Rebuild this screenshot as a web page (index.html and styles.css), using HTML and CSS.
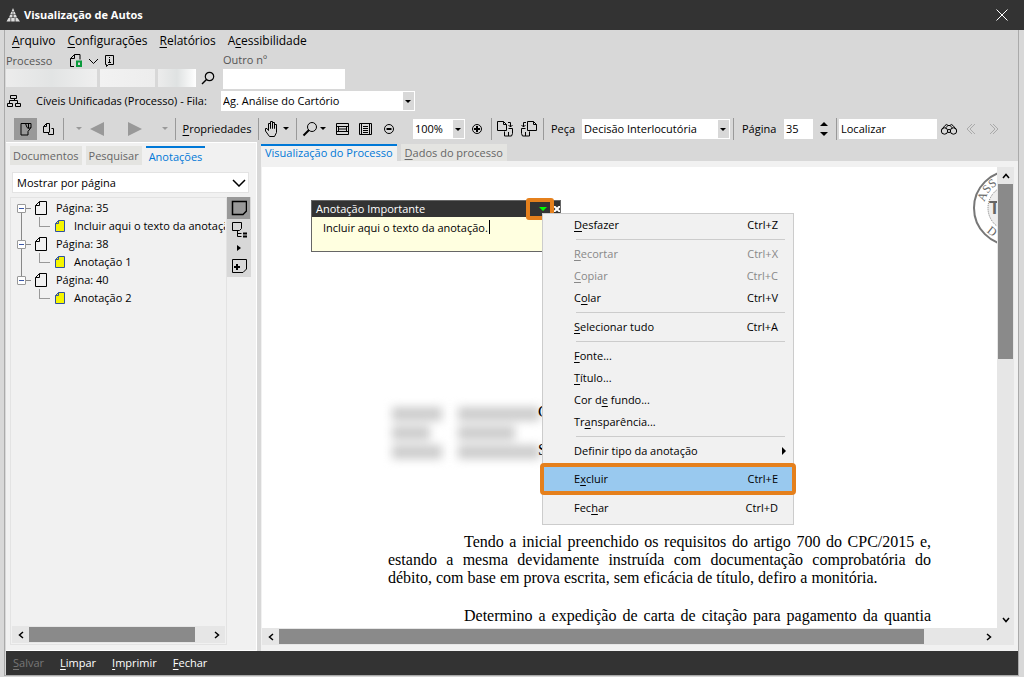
FILE: index.html
```html
<!DOCTYPE html>
<html lang="pt-BR">
<head>
    <meta charset="UTF-8">
    <meta name="viewport" content="width=device-width, initial-scale=1.0">
    <title>Visualização de Autos</title>
    <link rel="stylesheet" href="styles.css">
</head>
<body>
    <header class="titlebar">
        <svg class="logo" width="14" height="14" viewBox="0 0 14 14"><path d="M7 0L8.500 3.500h-3zM5.200 4h1.500v2.500H4.200zM7.300 4h1.500l1 2.500H7.300zM4 7h2.500v2.500H3zM7.500 7H10l1 2.500H7.500zM2.500 10H4.500v3.500H0.500zM5.200 10h3.500v3.500H5.200zM9.500 10h2l2.500 3.500H9.500z"/></svg>
        <h1>Visualização de Autos</h1>
        <button class="close" aria-label="Fechar janela"><svg width="12" height="12" viewBox="0 0 12 12"><path d="M0.500 0.500l11 11M11.500 0.500l-11 11"/></svg></button>
    </header>

    <main class="window">
        <nav class="menubar">
            <a href="#"><u>A</u>rquivo</a>
            <a href="#"><u>C</u>onfigurações</a>
            <a href="#"><u>R</u>elatórios</a>
            <a href="#">A<u>c</u>essibilidade</a>
        </nav>

        <div class="process">
            <div class="process-number">
                <div class="process-label">
                    <label for="numero">Processo</label>
                    <svg class="icon" width="46" height="14" viewBox="0 0 46 14">
                        <path d="M5 12.500H1.500v-8l4-4h5.500v5M1.500 4.500h4v-4M20 5l4.500 4.500L29 5M36.500 1.500h8v9h-5l-2 2v-2h-1zM40.500 5v4M39 8.500h3M40.500 3v1"/>
                        <path class="green" d="M8 7.500h4v4.500h-4z"/>
                    </svg>
                </div>
                <div class="number-fields">
                    <input class="number-main" id="numero" type="text">
                    <input class="number-year" type="text" aria-label="Ano">
                    <input class="number-court" type="text" aria-label="Foro">
                    <button aria-label="Pesquisar processo"><svg class="icon" width="14" height="14" viewBox="0 0 14 14"><circle cx="8.500" cy="5.500" r="4.200" stroke-width="1.200"/><path d="M5.500 8.500L1 13" stroke-width="1.500"/></svg></button>
                </div>
            </div>
            <div class="other-number">
                <label for="outro">Outro nº</label>
                <input id="outro" type="text">
            </div>
        </div>

        <div class="queue">
            <svg class="icon" width="16" height="14" viewBox="0 0 16 14"><path d="M4.500 1.500h6v3h-6zM8.500 4.500v2M3.500 9V6.500h8V9M1.500 9.500h5v3h-5zM9.500 9.500h5v3h-5z"/></svg>
            <label for="fila">Cíveis Unificadas (Processo) - Fila:</label>
            <span class="combo combo-queue"><select id="fila"><option>Ag. Análise do Cartório</option></select></span>
        </div>

        <div class="toolbar">
            <div class="group group-view">
                <button class="tool active" aria-label="Página"><svg class="icon" width="12" height="14" viewBox="0 0 12 14"><path d="M1 1.500h10v4l-3 4v3.500H1zM5.500 1.500l1.500 4 1.500 1 2.500-1M8.500 2v4"/></svg></button>
                <button class="tool" aria-label="Páginas"><svg class="icon" width="13" height="14" viewBox="0 0 13 14"><path d="M7 10.500H1.500v-6l3-3h3v9M4.500 1.500v3h-3M9.500 6.500h2v6h-5v-2"/></svg></button>
            </div>
            <div class="group group-nav">
                <button class="drop dim" aria-label="Opções anteriores"></button>
                <button class="nav" aria-label="Anterior"><svg width="14" height="14" viewBox="0 0 14 14"><path d="M14 0v14L0 7z"/></svg></button>
                <button class="nav spaced" aria-label="Próximo"><svg width="14" height="14" viewBox="0 0 14 14"><path d="M0 0v14l14-7z"/></svg></button>
                <button class="drop dim spaced" aria-label="Opções seguintes"></button>
            </div>
            <div class="group">
                <button class="properties"><u>P</u>ropriedades</button>
            </div>
            <div class="group group-hand">
                <button aria-label="Mover"><svg class="icon" width="18" height="18" viewBox="0 0 18 18"><path d="M6.500 16.500L2.500 11V8.500h1.500l1.500 2V3.500h2v5V1.500h2v7V2.500h2v6V4.500h2v8l-2 4z"/></svg></button>
                <button class="drop" aria-label="Opções de mover"></button>
            </div>
            <div class="group group-zoom">
                <button aria-label="Lupa"><svg class="icon" width="16" height="16" viewBox="0 0 16 16"><circle cx="10" cy="6" r="4.500"/><path d="M7 9l-5.500 5.500" stroke-width="2"/></svg></button>
                <button class="drop" aria-label="Opções da lupa"></button>
                <button class="fit" aria-label="Ajustar à largura"><svg class="icon" width="16" height="16" viewBox="0 0 16 16"><path d="M1.500 2.500h12v11h-12zM1.500 5.500h12v5h-12zM4 8h7M3.500 6v4M11.500 6v4"/></svg></button>
                <button class="fit" aria-label="Página inteira"><svg class="icon" width="16" height="16" viewBox="0 0 16 16"><path d="M1.500 2.500h12v11h-12zM3.500 2.500v11M11.500 2.500v11M5 5.500h5M5 7.500h5M5 9.500h5M5 11.500h5"/></svg></button>
                <button class="fit" aria-label="Diminuir"><svg class="icon" width="16" height="16" viewBox="0 0 16 16"><circle cx="8" cy="8" r="4.500"/><path d="M5.500 8h5" stroke-width="2"/></svg></button>
                <span class="combo combo-zoom"><select aria-label="Zoom"><option>100%</option></select></span>
                <button aria-label="Aumentar"><svg class="icon" width="16" height="16" viewBox="0 0 16 16"><circle cx="8" cy="8" r="4.500"/><path d="M5 8h6M8 5v6" stroke-width="2"/></svg></button>
            </div>
            <div class="group group-rotate">
                <button aria-label="Girar à direita"><svg class="icon" width="18" height="18" viewBox="0 0 18 18"><path d="M1.500 1.500h6l3 3v6h-9zM7.500 1.500v3h3M12 2.500h2.500V7M12.500 5l2 2 2-2M12.500 8.500h4v5l-1 2.500H8.500V11.500M12.500 12v4"/></svg></button>
                <button aria-label="Girar à esquerda"><svg class="icon" width="18" height="18" viewBox="0 0 18 18"><path d="M7.500 1.500h6l3 3v6h-9zM13.500 1.500v3h3M6 2.500H3.500V7M1.500 5l2 2 2-2M5.500 8.500h-4v5l1 2.500h7V11.500M5.500 12v4"/></svg></button>
            </div>
            <div class="group group-piece">
                <label for="peca">Peça</label>
                <span class="combo combo-piece"><select id="peca"><option>Decisão Interlocutória</option></select></span>
            </div>
            <div class="group group-page">
                <label for="pagina">Página</label>
                <input id="pagina" type="text" value="35">
                <span class="spinner">
                    <button aria-label="Próxima página"><svg width="8" height="4" viewBox="0 0 8 4"><path d="M0 4h8L4 0z"/></svg></button>
                    <button aria-label="Página anterior"><svg width="8" height="4" viewBox="0 0 8 4"><path d="M0 0h8L4 4z"/></svg></button>
                </span>
            </div>
            <div class="group group-find">
                <input type="text" value="Localizar" aria-label="Localizar">
                <button aria-label="Buscar"><svg class="icon" width="18" height="14" viewBox="0 0 18 14"><circle cx="4.500" cy="9" r="3.200"/><circle cx="13.500" cy="9" r="3.200"/><circle cx="9" cy="9" r="1.600"/><path d="M1.800 7.500L5 3.500q2-2 3 0h2q1-2 3 0l3.200 4M5.500 6L8 3.500M12.500 6L10 3.500"/></svg></button>
                <button class="step" aria-label="Ocorrência anterior"><svg class="icon" width="12" height="12" viewBox="0 0 12 12"><path d="M7 1L2 6l5 5M10 1L5 6l5 5"/></svg></button>
                <button class="step" aria-label="Próxima ocorrência"><svg class="icon" width="12" height="12" viewBox="0 0 12 12"><path d="M2 1l5 5-5 5M5 1l5 5-5 5"/></svg></button>
            </div>
        </div>

        <div class="panes">
            <aside class="sidebar">
                <div class="tabs">
                    <button class="tab">Documentos</button>
                    <button class="tab">Pesquisar</button>
                    <button class="tab current">Anotações</button>
                </div>
                <div class="filter">
                    <select aria-label="Mostrar"><option>Mostrar por página</option></select>
                    <svg class="icon" width="14" height="8" viewBox="0 0 14 8"><path d="M1 1l6 6 6-6" stroke-width="1.500"/></svg>
                </div>
                <div class="annotations">
                    <div class="tree-box">
                        <ul class="tree">
                            <li>
                                <div class="node"><span class="toggle"></span><svg class="icon" width="12" height="14" viewBox="0 0 12 14"><path d="M0.500 4.500l4-4h7v13h-11zM4.500 0.500v4h-4"/></svg>Página: 35</div>
                                <div class="leaf"><svg class="note-icon" width="10" height="12" viewBox="0 0 10 12"><path d="M0.500 3.500l3-3h6v11h-9zM3.500 0.500v3h-3"/></svg>Incluir aqui o texto da anotação.</div>
                            </li>
                            <li>
                                <div class="node"><span class="toggle"></span><svg class="icon" width="12" height="14" viewBox="0 0 12 14"><path d="M0.500 4.500l4-4h7v13h-11zM4.500 0.500v4h-4"/></svg>Página: 38</div>
                                <div class="leaf"><svg class="note-icon" width="10" height="12" viewBox="0 0 10 12"><path d="M0.500 3.500l3-3h6v11h-9zM3.500 0.500v3h-3"/></svg>Anotação 1</div>
                            </li>
                            <li>
                                <div class="node"><span class="toggle"></span><svg class="icon" width="12" height="14" viewBox="0 0 12 14"><path d="M0.500 4.500l4-4h7v13h-11zM4.500 0.500v4h-4"/></svg>Página: 40</div>
                                <div class="leaf"><svg class="note-icon" width="10" height="12" viewBox="0 0 10 12"><path d="M0.500 3.500l3-3h6v11h-9zM3.500 0.500v3h-3"/></svg>Anotação 2</div>
                            </li>
                        </ul>
                        <div class="scroll-x">
                            <button aria-label="Rolar à esquerda"><svg class="icon" width="6" height="8" viewBox="0 0 6 8"><path d="M5 1L1.500 4 5 7" stroke-width="1.500"/></svg></button>
                            <div class="track"><div class="thumb thumb-tree"></div></div>
                            <button aria-label="Rolar à direita"><svg class="icon" width="6" height="8" viewBox="0 0 6 8"><path d="M1 1l3.500 3L1 7" stroke-width="1.500"/></svg></button>
                        </div>
                    </div>
                    <div class="note-tools">
                        <button class="active" aria-label="Nota"><svg class="icon" width="16" height="16" viewBox="0 0 16 16"><path d="M1.500 1.500h14v9.500l-3.500 3.500H1.500z" stroke-width="1.500"/></svg></button>
                        <button aria-label="Agrupar"><svg class="icon" width="16" height="18" viewBox="0 0 16 18"><path d="M1.500 1.500h9v6l-2 2h-7zM6.500 9.500v6h4M6.500 12.500h4" /><path d="M12 12.500h4M12 15.500h4" stroke-width="2"/></svg></button>
                        <button class="more" aria-label="Mais"><svg width="4" height="6" viewBox="0 0 4 6"><path d="M0 0v6l4-3z"/></svg></button>
                        <button aria-label="Nova nota"><svg class="icon" width="16" height="16" viewBox="0 0 16 16"><path d="M1.500 1.500h14v9.500l-3.500 3.500H1.500z"/><path d="M3 9h6M6 6v6" stroke-width="2"/></svg></button>
                    </div>
                </div>
            </aside>

            <section class="viewer">
                <div class="tabs">
                    <button class="tab current">Visualização do Processo</button>
                    <button class="tab"><u>D</u>ados do processo</button>
                </div>
                <div class="viewer-body">
                    <div class="viewport">
                        <article class="page">
                            <div class="redacted">
                                <div class="smudges smudges-left"><span></span><span></span><span></span></div>
                                <div class="smudges smudges-right"><span></span><span></span><span></span></div>
                            </div>
                            <span class="party party-first">C</span>
                            <span class="party">S</span>
                            <p>Tendo a inicial preenchido os requisitos do artigo 700 do CPC/2015 e, estando a mesma devidamente instruída com documentação comprobatória do débito, com base em prova escrita, sem eficácia de título, defiro a monitória.</p>
                            <p class="cut">Determino a expedição de carta de citação para pagamento da quantia</p>
                            <svg class="stamp" width="78" height="78" viewBox="0 0 78 78">
                                <defs><path id="ring" d="M12 39a27 27 0 0 1 54 0"/><path id="ring-low" d="M5 39a34 34 0 0 0 68 0"/></defs>
                                <circle cx="39" cy="39" r="37"/>
                                <circle class="inner" cx="39" cy="39" r="23"/>
                                <text><textPath href="#ring" startOffset="6">ASS</textPath></text>
                                <text><textPath href="#ring-low" startOffset="26">D</textPath></text>
                                <text class="stamp-name" x="17" y="45">T</text>
                            </svg>
                        </article>
                        <div class="scroll-y">
                            <button aria-label="Rolar para cima"><svg class="icon" width="8" height="6" viewBox="0 0 8 6"><path d="M1 5l3-3.500L7 5" stroke-width="1.500"/></svg></button>
                            <div class="track"><div class="thumb thumb-page"></div></div>
                            <button aria-label="Rolar para baixo"><svg class="icon" width="8" height="6" viewBox="0 0 8 6"><path d="M1 1l3 3.500L7 1" stroke-width="1.500"/></svg></button>
                        </div>
                    </div>
                    <div class="scroll-x scroll-doc">
                        <button aria-label="Rolar à esquerda"><svg class="icon" width="6" height="8" viewBox="0 0 6 8"><path d="M5 1L1.500 4 5 7" stroke-width="1.500"/></svg></button>
                        <div class="track"><div class="thumb thumb-doc"></div></div>
                        <button aria-label="Rolar à direita"><svg class="icon" width="6" height="8" viewBox="0 0 6 8"><path d="M1 1l3.500 3L1 7" stroke-width="1.500"/></svg></button>
                    </div>

                    <div class="note">
                        <div class="note-head">
                            <span>Anotação Importante</span>
                            <button class="note-menu" aria-label="Menu da anotação"><svg width="8" height="4" viewBox="0 0 8 4"><path d="M0 0h8L4 4z"/></svg></button>
                            <button class="note-close" aria-label="Fechar anotação"><svg width="6" height="6" viewBox="0 0 6 6"><path d="M0 0l6 6M6 0L0 6"/></svg></button>
                        </div>
                        <div class="note-text">Incluir aqui o texto da anotação.<span class="caret"></span></div>
                    </div>

                    <div class="context-menu">
                        <button><span><u>D</u>esfazer</span><span>Ctrl+Z</span></button>
                        <hr>
                        <button disabled><span><u>R</u>ecortar</span><span>Ctrl+X</span></button>
                        <button disabled><span><u>C</u>opiar</span><span>Ctrl+C</span></button>
                        <button><span>C<u>o</u>lar</span><span>Ctrl+V</span></button>
                        <hr>
                        <button><span><u>S</u>elecionar tudo</span><span>Ctrl+A</span></button>
                        <hr>
                        <button><span><u>F</u>onte...</span></button>
                        <button><span><u>T</u>ítulo...</span></button>
                        <button><span>Cor d<u>e</u> fundo...</span></button>
                        <button><span>Tr<u>a</u>nsparência...</span></button>
                        <hr>
                        <button class="submenu"><span>Def<u>i</u>nir tipo da anotação</span><svg width="4" height="8" viewBox="0 0 4 8"><path d="M0 0v8l4-4z"/></svg></button>
                        <button class="selected"><span>E<u>x</u>cluir</span><span>Ctrl+E</span></button>
                        <button><span>Fec<u>h</u>ar</span><span>Ctrl+D</span></button>
                    </div>
                </div>
            </section>
        </div>

        <footer class="actions">
            <button disabled><u>S</u>alvar</button>
            <button><u>L</u>impar</button>
            <button><u>I</u>mprimir</button>
            <button><u>F</u>echar</button>
        </footer>
    </main>
</body>
</html>
```
FILE: styles.css
```css
* {
    box-sizing: border-box;
}
body {
    margin: 0;
    height: 100vh;
    display: flex;
    flex-direction: column;
    overflow: hidden;
    background: #d8d8d8;
    color: #000;
    font: 11px/16px "Open Sans", "Noto Sans", sans-serif;
}
button,
input,
select {
    margin: 0;
    padding: 0;
    border: none;
    border-radius: 0;
    background: none;
    color: inherit;
    font: inherit;
}
button {
    display: flex;
    align-items: center;
    justify-content: center;
}
svg {
    display: block;
    flex: none;
}
u {
    text-underline-offset: 2px;
}
.icon {
    fill: none;
    stroke: #000;
}
.icon .green {
    stroke: #0a9a3c;
    stroke-width: 2;
}

/* title bar */
.titlebar {
    display: flex;
    align-items: center;
    gap: 4px;
    height: 30px;
    flex: none;
    padding: 0 16px 0 6px;
    background: #333;
    color: #fff;
}
.titlebar h1 {
    flex: 1;
    margin: 0;
    font-size: 11px;
    font-weight: bold;
}
.logo {
    fill: #ddd;
}
.close svg {
    stroke: #fff;
}

/* window */
.window {
    flex: 1;
    min-height: 0;
    display: flex;
    flex-direction: column;
    margin: 0 5px 1px 4px;
    border: solid #aaa;
    border-width: 0 1px 1px;
    padding-left: 1px;
}
.menubar {
    display: flex;
    gap: 12px;
    height: 22px;
    align-items: center;
    padding-left: 6px;
    font-size: 12px;
}
.menubar a {
    color: #000;
    text-decoration: none;
}
.process {
    display: flex;
    gap: 6px;
    height: 37px;
    color: #555;
}
.process-number {
    width: 211px;
}
.process-label {
    display: flex;
    height: 17px;
    gap: 15px;
    align-items: center;
}
.process-label label {
    width: 48px;
}
.number-fields {
    display: flex;
    gap: 3px;
    height: 18px;
}
.number-fields input,
.other-number input {
    height: 18px;
    background: #fff;
}
.number-fields .number-main {
    width: 91px;
    background: linear-gradient(90deg, #ececec, #e2e4e4 50%, #efefef);
}
.number-fields .number-year {
    width: 55px;
    background: linear-gradient(90deg, #f2f2f2, #ededed);
}
.number-fields .number-court {
    width: 38px;
    background: linear-gradient(90deg, #ececec, #dfe2e2 50%, #fff);
}
.number-fields button {
    width: 22px;
}
.other-number label {
    display: block;
    height: 17px;
}
.other-number input {
    width: 122px;
    height: 20px;
}
.queue {
    display: flex;
    align-items: center;
    height: 24px;
    gap: 14px;
}
.queue label {
    width: 171px;
    white-space: nowrap;
}

/* drop-downs with a grey arrow box */
.combo {
    position: relative;
    display: flex;
    height: 20px;
    background: #fff;
}
.combo select {
    flex: 1;
    width: 100%;
    padding: 0 12px 0 2px;
    appearance: none;
}
.combo::before {
    content: "";
    position: absolute;
    top: 1px;
    right: 1px;
    bottom: 1px;
    width: 11px;
    background: #d8d8d8;
    pointer-events: none;
}
.combo::after,
.drop::after {
    content: "";
    border: 3px solid transparent;
    border-top-color: #000;
    border-bottom: none;
}
.combo::after {
    position: absolute;
    top: 9px;
    right: 4px;
    pointer-events: none;
}
.combo-queue {
    width: 194px;
}
.combo-zoom {
    width: 52px;
    margin: 0 4px 0 16px;
}
.combo-piece {
    width: 148px;
}

/* toolbar */
.toolbar {
    display: flex;
    align-items: center;
    height: 29px;
    padding: 4px 0 2px 8px;
    flex: none;
}
.group {
    display: flex;
    align-items: center;
    height: 22px;
    border-right: 1px solid #999;
}
.tool {
    width: 23px;
    height: 22px;
}
.active {
    background: #999;
}
.group-view {
    padding-right: 3px;
}
.drop {
    width: 10px;
    height: 16px;
}
.dim::after {
    border-top-color: #999;
}
.nav {
    width: 26px;
    fill: #999;
}
.spaced {
    margin-left: 12px;
}
.group-nav {
    padding: 0 5px 0 10px;
}
.properties {
    width: 82px;
}
.group-hand {
    padding: 0 5px 0 4px;
}
.group-zoom {
    padding: 0 6px 0 5px;
}
.fit {
    margin-left: 7px;
}
.group-rotate {
    gap: 6px;
    padding: 0 5px 0 4px;
}
.group-piece {
    padding: 0 3px 0 7px;
}
.group-piece label {
    width: 31px;
}
.group-page {
    padding: 0 8px;
}
.group-page label {
    width: 42px;
}
.group-page input {
    width: 29px;
    height: 20px;
    padding-left: 2px;
    background: #fff;
}
.spinner {
    display: flex;
    flex-direction: column;
    gap: 6px;
    margin-left: 7px;
}
.group-find {
    border: none;
    padding-left: 2px;
    gap: 3px;
}
.group-find input {
    width: 98px;
    height: 20px;
    padding-left: 2px;
    background: #fff;
}
.step {
    width: 20px;
}
.step .icon {
    stroke: #aaa;
}

/* panes */
.panes {
    flex: 1;
    min-height: 0;
    display: flex;
}
.tabs {
    display: flex;
    gap: 4px;
    height: 19px;
    flex: none;
}
.tab {
    height: 18px;
    padding: 0 4px;
    background: #e4e4e1;
    color: #666;
    white-space: nowrap;
}
.current {
    padding-bottom: 2px;
    background: #f1f1f1;
    color: #0078d7;
    border-top: 2px solid #0078d7;
}
.sidebar {
    width: 251px;
    flex: none;
    display: flex;
    flex-direction: column;
    padding: 3px 5px 5px 4px;
    border: solid #fff;
    border-width: 1px 1px 1px 0;
    background: #f1f1f1;
}
.sidebar .tab {
    height: 19px;
    padding: 0 3px;
}
.filter {
    position: relative;
    height: 21px;
    flex: none;
    margin: 7px 2px 4px 2px;
    border: 1px solid #e3e3e3;
    background: #fff;
}
.filter select {
    width: 100%;
    height: 100%;
    padding-left: 4px;
    appearance: none;
}
.filter .icon {
    position: absolute;
    top: 6px;
    right: 2px;
    pointer-events: none;
}
.annotations {
    flex: 1;
    min-height: 0;
    display: flex;
}
.tree-box {
    width: 217px;
    display: flex;
    flex-direction: column;
    border: 1px solid #e3e3e3;
    padding: 1px;
    overflow: hidden;
}
.tree {
    position: relative;
    flex: 1;
    margin: 0;
    padding: 0 0 0 5px;
    list-style: none;
    white-space: nowrap;
    overflow: hidden;
}
.tree li {
    position: relative;
}
.tree li:not(:last-child)::before {
    content: "";
    position: absolute;
    left: 4px;
    top: 13px;
    bottom: -5px;
    border-left: 1px solid #888;
}
.node,
.leaf {
    display: flex;
    align-items: center;
    height: 18px;
}
.node .icon {
    margin: 0 9px 0 9px;
}
.toggle {
    position: relative;
    width: 9px;
    height: 9px;
    border: 1px solid #999;
    border-radius: 1px;
    background: linear-gradient(#3c58a8, #3c58a8) center / 5px 1px no-repeat #fff;
}
.toggle::after {
    content: "";
    position: absolute;
    left: 8px;
    top: 3px;
    width: 5px;
    border-top: 1px solid #888;
}
.leaf {
    position: relative;
    padding-left: 38px;
}
.leaf::before {
    content: "";
    position: absolute;
    left: 22px;
    top: 0;
    width: 10px;
    height: 9px;
    border: solid #999;
    border-width: 0 0 1px 1px;
}
.note-icon {
    margin-right: 9px;
    fill: #f5f500;
    stroke: #2f50a0;
}
.note-tools {
    width: 24px;
    align-self: flex-start;
    background: #d8d8d8;
}
.note-tools button {
    width: 23px;
    height: 22px;
}
.note-tools .more {
    height: 14px;
}

/* scroll bars */
.scroll-x,
.scroll-y {
    display: flex;
    flex: none;
    background: #e6e6e6;
}
.scroll-x {
    height: 17px;
}
.scroll-x button {
    width: 17px;
}
.scroll-y {
    flex-direction: column;
    width: 17px;
}
.scroll-y button {
    height: 17px;
}
.scroll-doc {
    padding-right: 17px;
}
.track {
    flex: 1;
    padding: 1px 0;
}
.scroll-y .track {
    padding: 0 1px;
}
.thumb {
    height: 100%;
    background: #8a8a8a;
}
.thumb-tree {
    width: 93%;
}
.thumb-doc {
    width: 92%;
}
.thumb-page {
    height: 41%;
}

/* document viewer */
.viewer {
    flex: 1;
    min-width: 0;
    display: flex;
    flex-direction: column;
    padding-left: 4px;
}
.viewer > .tabs {
    padding-top: 2px;
    height: 20px;
}
.viewer-body {
    position: relative;
    flex: 1;
    min-height: 0;
    display: flex;
    flex-direction: column;
    margin-top: -1px;
    padding: 6px 4px 6px 1px;
    background: #f1f1f1;
}
.viewport {
    flex: 1;
    min-height: 0;
    display: flex;
}
.page {
    position: relative;
    flex: 1;
    min-width: 0;
    padding: 230px 66px 0 126px;
    overflow: hidden;
    background: #fff;
    font: 16px/18px "Liberation Serif", serif;
}
.page p {
    margin: 0 0 20px;
    text-align: justify;
    text-indent: 76px;
}
.page .cut {
    text-align-last: justify;
}
.redacted {
    display: flex;
    gap: 16px;
    height: 136px;
    padding: 10px 0 0 4px;
}
.smudges {
    display: flex;
    flex-direction: column;
    gap: 5px;
    filter: blur(5px);
}
.smudges span {
    width: 100%;
    height: 14px;
    background: #ccc;
}
.smudges-left {
    width: 50px;
}
.smudges-left span:nth-child(2) {
    width: 75%;
}
.smudges-right {
    width: 82px;
}
.smudges-right span:nth-child(2) {
    width: 70%;
}
.party {
    position: absolute;
    top: 274px;
    left: 276px;
}
.party-first {
    top: 236px;
}
.stamp {
    position: absolute;
    top: 2px;
    right: -53px;
    fill: none;
    stroke: #777;
    stroke-width: 2;
}
.stamp .inner {
    fill: #eee;
    stroke-width: 1;
    stroke-dasharray: 1 1;
}
.stamp text {
    fill: #666;
    stroke: none;
    font-size: 12px;
}
.stamp .stamp-name {
    font: bold 18px "Liberation Sans", sans-serif;
}

/* floating note */
.note {
    position: absolute;
    left: 50px;
    top: 39px;
    width: 250px;
    height: 52px;
    border: 1px solid #666;
    background: #ffffe0;
}
.note-head {
    display: flex;
    align-items: center;
    height: 16px;
    padding-left: 4px;
    background: #333;
    color: #fff;
}
.note-head span {
    flex: 1;
}
.note-menu {
    width: 28px;
    height: 22px;
    border: 4px solid #e5801c;
    border-radius: 3px;
    fill: #0f0;
    padding: 0 0 0 5px;
}
.note-close {
    stroke: #fff;
    stroke-width: 2;
}
.note-text {
    display: flex;
    padding: 3px 11px;
}
.caret {
    height: 14px;
    margin-left: 1px;
    border-left: 1px solid #000;
}

/* context menu */
.context-menu {
    position: absolute;
    left: 281px;
    top: 52px;
    width: 252px;
    height: 312px;
    border: 1px solid #ccc;
    background: #f1f1f1;
}
.context-menu button {
    width: 100%;
    height: 22px;
    padding: 0 15px 0 31px;
    justify-content: space-between;
}
.context-menu button:disabled {
    color: #888;
}
.context-menu hr {
    height: 1px;
    margin: 3px 8px 3px 33px;
    border: none;
    background: #ccc;
}
.context-menu .submenu {
    padding-right: 7px;
}
.context-menu .selected {
    position: relative;
    height: 24px;
    margin: 5px 0 6px;
    background: #99c9ef;
}
.selected::after {
    content: "";
    position: absolute;
    inset: -4px -3px;
    border: 4px solid #e5801c;
    border-radius: 4px;
}

/* bottom bar */
.actions {
    display: flex;
    flex: none;
    gap: 16px;
    height: 24px;
    padding-left: 7px;
    background: #333;
    color: #fff;
}
.actions button:disabled {
    color: #777;
}
```
